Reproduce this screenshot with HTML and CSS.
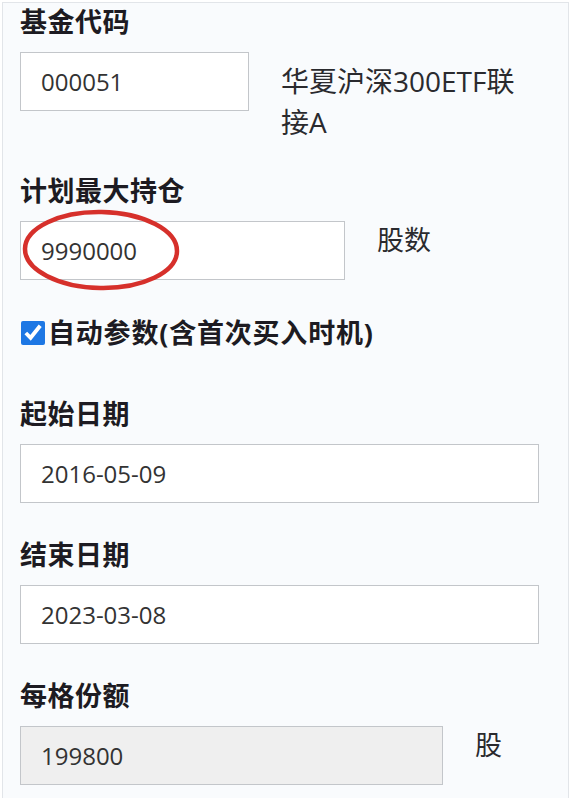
FILE: index.html
```html
<!DOCTYPE html>
<html lang="zh-CN">
<head>
    <meta charset="UTF-8">
    <meta name="viewport" content="width=device-width, initial-scale=1.0">
    <title>网格参数</title>
    <link rel="stylesheet" href="styles.css">
</head>
<body>
    <div class="panel">
        <!-- 基金代码 -->
        <div class="label first">基金代码</div>
        <div class="row">
            <input type="text" class="box code" value="000051" readonly>
            <div class="fund-name">华夏沪深300ETF联接A</div>
        </div>

        <!-- 计划最大持仓 -->
        <div class="label after-name">计划最大持仓</div>
        <div class="row">
            <div class="circled">
                <input type="text" class="box max" value="9990000" readonly>
                <!-- red hand-drawn mark over the value -->
                <svg class="mark" width="164" height="88" viewBox="0 0 164 88">
                    <ellipse cx="80" cy="44" rx="76" ry="38" fill="none" stroke="#d6302b" stroke-width="4.5" transform="rotate(1 80 44)"/>
                </svg>
            </div>
            <div class="unit">股数</div>
        </div>

        <label class="auto">
            <input type="checkbox" checked>
            <span>自动参数(含首次买入时机)</span>
        </label>

        <!-- 日期 -->
        <div class="label after-check">起始日期</div>
        <div class="row">
            <input type="text" class="box wide" value="2016-05-09" readonly>
        </div>

        <div class="label">结束日期</div>
        <div class="row">
            <input type="text" class="box wide" value="2023-03-08" readonly>
        </div>

        <!-- 每格份额 -->
        <div class="label">每格份额</div>
        <div class="row">
            <input type="text" class="box share" value="199800" disabled>
            <div class="unit">股</div>
        </div>
    </div>
</body>
</html>
```

FILE: styles.css
```css
/* Grid trading form */
body {
    margin: 0;
    background: #fff;
    font-family: "Open Sans", "Noto Sans CJK SC", sans-serif;
    color: #1d1b22;
}
.panel {
    margin: 2px 3px 0 2px;
    border: 1px solid #e2e5e9;
    border-bottom: none;
    background: #f9fbfd;
    padding: 0 0 20px 17px;
    min-height: 796px;
    box-sizing: border-box;
}
.label {
    font-size: 27px;
    font-weight: bold;
    line-height: 36px;
    letter-spacing: 0.5px;
    margin-top: 34px;
}
.label.first {
    margin-top: 1px;
}
.label.after-name {
    margin-top: 30px;
}
.label.after-check {
    margin-top: 45px;
}
.row {
    display: flex;
    align-items: flex-start;
    margin-top: 12px;
}
.box {
    height: 59px;
    box-sizing: border-box;
    border: 1px solid #c3c6ca;
    background: #fff;
    padding: 0 20px;
    font-family: "Open Sans", sans-serif;
    font-size: 24px;
    color: #333;
    outline: none;
    margin: 0;
}
.code {
    width: 229px;
}
.max {
    width: 325px;
}
.wide {
    width: 519px;
}
.share {
    width: 423px;
    background: #efefef;
}
.fund-name {
    width: 245px;
    margin-left: 32px;
    padding-top: 9px;
    font-size: 28px;
    line-height: 41px;
    color: #2a2a2e;
}
.unit {
    margin-left: 32px;
    font-size: 27px;
    line-height: 38px;
    color: #2a2a2e;
}
.circled {
    position: relative;
}
.mark {
    position: absolute;
    left: 1px;
    top: -15px;
}
.auto {
    display: flex;
    align-items: center;
    margin-top: 35px;
    font-size: 27px;
    font-weight: bold;
    line-height: 36px;
    letter-spacing: 0.8px;
}
.auto input {
    width: 24px;
    height: 24px;
    margin: 0 3px 0 1px;
    accent-color: #1d77e4;
}
```
